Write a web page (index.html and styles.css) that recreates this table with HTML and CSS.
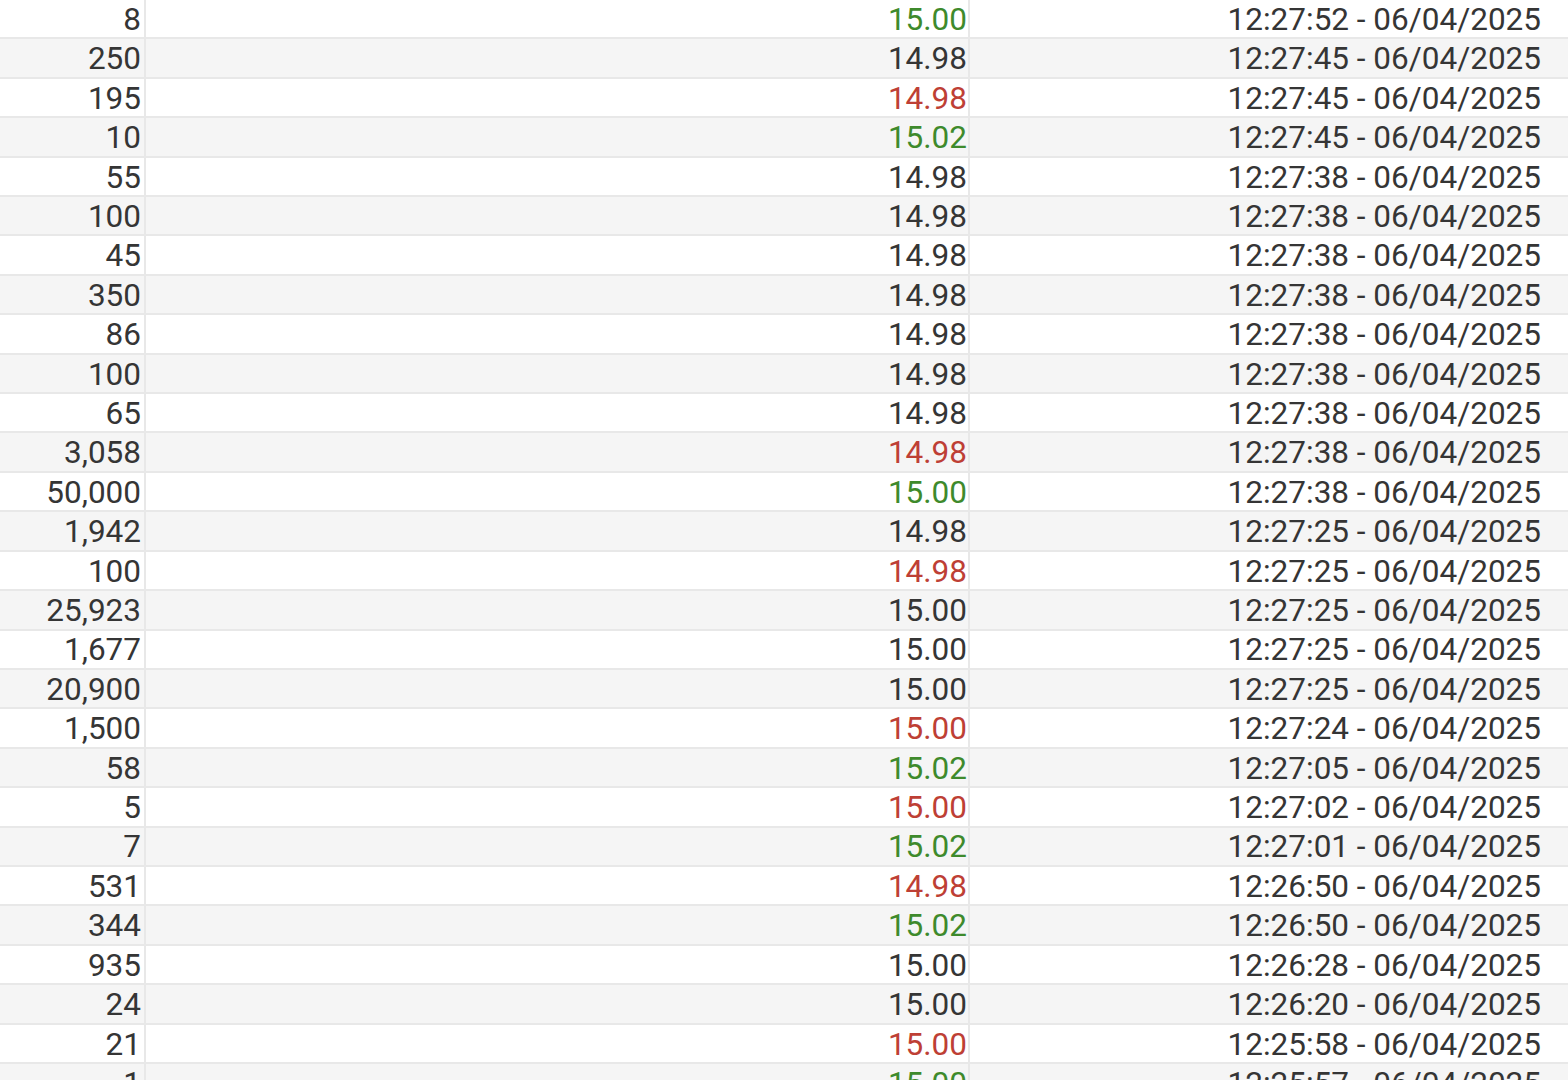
FILE: index.html
```html
<!DOCTYPE html>
<html lang="en">
<head>
  <meta charset="UTF-8">
  <meta name="viewport" content="width=device-width, initial-scale=1.0">
  <title>Trades</title>
  <link rel="stylesheet" href="styles.css">
</head>
<body>
  <table class="trades">
    <tbody>
      <tr><td class="vol">8</td><td class="price up">15.00</td><td class="time">12:27:52 - 06/04/2025</td></tr>
      <tr><td class="vol">250</td><td class="price">14.98</td><td class="time">12:27:45 - 06/04/2025</td></tr>
      <tr><td class="vol">195</td><td class="price down">14.98</td><td class="time">12:27:45 - 06/04/2025</td></tr>
      <tr><td class="vol">10</td><td class="price up">15.02</td><td class="time">12:27:45 - 06/04/2025</td></tr>
      <tr><td class="vol">55</td><td class="price">14.98</td><td class="time">12:27:38 - 06/04/2025</td></tr>
      <tr><td class="vol">100</td><td class="price">14.98</td><td class="time">12:27:38 - 06/04/2025</td></tr>
      <tr><td class="vol">45</td><td class="price">14.98</td><td class="time">12:27:38 - 06/04/2025</td></tr>
      <tr><td class="vol">350</td><td class="price">14.98</td><td class="time">12:27:38 - 06/04/2025</td></tr>
      <tr><td class="vol">86</td><td class="price">14.98</td><td class="time">12:27:38 - 06/04/2025</td></tr>
      <tr><td class="vol">100</td><td class="price">14.98</td><td class="time">12:27:38 - 06/04/2025</td></tr>
      <tr><td class="vol">65</td><td class="price">14.98</td><td class="time">12:27:38 - 06/04/2025</td></tr>
      <tr><td class="vol">3,058</td><td class="price down">14.98</td><td class="time">12:27:38 - 06/04/2025</td></tr>
      <tr><td class="vol">50,000</td><td class="price up">15.00</td><td class="time">12:27:38 - 06/04/2025</td></tr>
      <tr><td class="vol">1,942</td><td class="price">14.98</td><td class="time">12:27:25 - 06/04/2025</td></tr>
      <tr><td class="vol">100</td><td class="price down">14.98</td><td class="time">12:27:25 - 06/04/2025</td></tr>
      <tr><td class="vol">25,923</td><td class="price">15.00</td><td class="time">12:27:25 - 06/04/2025</td></tr>
      <tr><td class="vol">1,677</td><td class="price">15.00</td><td class="time">12:27:25 - 06/04/2025</td></tr>
      <tr><td class="vol">20,900</td><td class="price">15.00</td><td class="time">12:27:25 - 06/04/2025</td></tr>
      <tr><td class="vol">1,500</td><td class="price down">15.00</td><td class="time">12:27:24 - 06/04/2025</td></tr>
      <tr><td class="vol">58</td><td class="price up">15.02</td><td class="time">12:27:05 - 06/04/2025</td></tr>
      <tr><td class="vol">5</td><td class="price down">15.00</td><td class="time">12:27:02 - 06/04/2025</td></tr>
      <tr><td class="vol">7</td><td class="price up">15.02</td><td class="time">12:27:01 - 06/04/2025</td></tr>
      <tr><td class="vol">531</td><td class="price down">14.98</td><td class="time">12:26:50 - 06/04/2025</td></tr>
      <tr><td class="vol">344</td><td class="price up">15.02</td><td class="time">12:26:50 - 06/04/2025</td></tr>
      <tr><td class="vol">935</td><td class="price">15.00</td><td class="time">12:26:28 - 06/04/2025</td></tr>
      <tr><td class="vol">24</td><td class="price">15.00</td><td class="time">12:26:20 - 06/04/2025</td></tr>
      <tr><td class="vol">21</td><td class="price down">15.00</td><td class="time">12:25:58 - 06/04/2025</td></tr>
      <tr><td class="vol">1</td><td class="price up">15.00</td><td class="time">12:25:57 - 06/04/2025</td></tr>
    </tbody>
  </table>
</body>
</html>
```
FILE: styles.css
```css
html, body {
  margin: 0;
  padding: 0;
  background: #fff;
  overflow: hidden;
}
.trades {
  width: 1568px;
  table-layout: fixed;
  border-collapse: separate;
  border-spacing: 0;
  font-family: Roboto, "Liberation Sans", sans-serif;
  font-size: 31.5px;
  color: #353535;
}
.trades tr {
  height: 39.42px;
}
.trades tr:nth-child(even) td {
  background: #f5f5f5;
}
.trades td {
  box-sizing: border-box;
  padding: 2px 0 0 0;
  text-align: right;
  vertical-align: middle;
  white-space: nowrap;
  border-bottom: 2px solid #e8e8e8;
  line-height: 1;
}
.vol {
  width: 146px;
  padding-right: 3px !important;
  border-right: 2px solid #e8e8e8;
}
.price {
  width: 824px;
  padding-right: 1px !important;
  border-right: 2px solid #e8e8e8;
}
.time {
  width: 598px;
  padding-right: 27px !important;
}
.up {
  color: #3e8a2c;
}
.down {
  color: #be3f35;
}
```
